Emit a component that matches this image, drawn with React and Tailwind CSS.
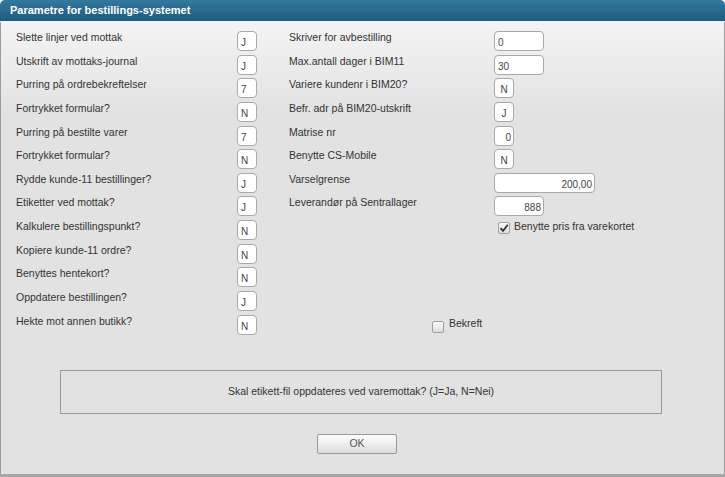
import React from 'react';

const leftRows = [
  ['Slette linjer ved mottak', 'J'],
  ['Utskrift av mottaks-journal', 'J'],
  ['Purring på ordrebekreftelser', '7'],
  ['Fortrykket formular?', 'N'],
  ['Purring på bestilte varer', '7'],
  ['Fortrykket formular?', 'N'],
  ['Rydde kunde-11 bestillinger?', 'J'],
  ['Etiketter ved mottak?', 'J'],
  ['Kalkulere bestillingspunkt?', 'N'],
  ['Kopiere kunde-11 ordre?', 'N'],
  ['Benyttes hentekort?', 'N'],
  ['Oppdatere bestillingen?', 'J'],
  ['Hekte mot annen butikk?', 'N'],
];

const rightRows = [
  { label: 'Skriver for avbestilling', value: '0', box: 'w-[50px] text-left pl-[3px]' },
  { label: 'Max.antall dager i BIM11', value: '30', box: 'w-[50px] text-left pl-[3px]' },
  { label: 'Variere kundenr i BIM20?', value: 'N', box: 'w-[20px] text-center' },
  { label: 'Befr. adr på BIM20-utskrift', value: 'J', box: 'w-[20px] text-center' },
  { label: 'Matrise nr', value: '0', box: 'w-[20px] text-right pr-[2px]' },
  { label: 'Benytte CS-Mobile', value: 'N', box: 'w-[20px] text-center' },
  { label: 'Varselgrense', value: '200,00', box: 'w-[101px] text-right pr-[2px]' },
  { label: 'Leverandør på Sentrallager', value: '888', box: 'w-[50px] text-right pr-[2px]' },
];

const Field = ({ value, className }) => (
  <div
    className={`h-[20px] shrink-0 rounded-[4px] border border-[#a9a9a9] bg-white pt-[5px] text-[10px] leading-[12px] text-[#444] ${className}`}
  >
    {value}
  </div>
);

const CheckBox = ({ checked }) => (
  <div className="flex h-[12px] w-[12px] shrink-0 items-center justify-center rounded-[2px] border border-[#a0a0a0] bg-[linear-gradient(#fafafa,#dcdcdc)]">
    {checked && (
      <svg width="10" height="10" viewBox="0 0 10 10">
        <path d="M1.5 5.2 L4 7.8 L8.8 1.8" fill="none" stroke="#333" strokeWidth="1.8" />
      </svg>
    )}
  </div>
);

export default function App() {
  return (
    <div className="flex h-[477px] w-[725px] flex-col overflow-hidden font-['Liberation_Sans',Arial,sans-serif] text-[#333]">
      <div className="flex h-[22px] shrink-0 items-center rounded-t-[5px] border-b border-[#e8f2f8] bg-[linear-gradient(#33789e,#1e5b80)] pl-[10px] text-[11px] font-bold text-white">
        Parametre for bestillings-systemet
      </div>

      <div className="flex flex-1 flex-col border-x border-[#9c9c9c] bg-[linear-gradient(#f4f4f4,#e2e2e2_90px)] pl-[14px] pt-[9px]">
        <div className="flex">
          <div className="flex w-[242px] flex-col">
            {leftRows.map(([label, value], i) => (
              <div key={i} className="flex h-[23.65px] items-start justify-between">
                <span className="pl-[1px] text-[10.5px] leading-[13px]">{label}</span>
                <Field value={value} className="w-[20px] pl-[3px]" />
              </div>
            ))}
          </div>

          <div className="ml-[32px] flex flex-col">
            {rightRows.map((r, i) => (
              <div key={i} className="flex h-[23.65px] items-start">
                <span className="w-[205px] text-[10.5px] leading-[13px]">{r.label}</span>
                <Field value={r.value} className={r.box} />
              </div>
            ))}
            <div className="flex h-[23.65px] items-start pl-[209px] pt-[2px]">
              <CheckBox checked />
              <span className="ml-[4px] mt-[-2px] text-[10.5px] leading-[13px]">Benytte pris fra varekortet</span>
            </div>
            <div className="h-[70.95px]" />
            <div className="flex h-[23.65px] items-start pl-[143px] pt-[6px]">
              <CheckBox />
              <span className="ml-[5px] mt-[-4px] text-[10.5px] leading-[13px]">Bekreft</span>
            </div>
          </div>
        </div>

        <div className="ml-[45px] mt-[32px] flex h-[44px] w-[602px] items-center justify-center border border-[#9a9a9a] text-[10.5px]">
          Skal etikett-fil oppdateres ved varemottak? (J=Ja, N=Nei)
        </div>

        <button className="ml-[302px] mt-[20px] h-[20px] w-[80px] rounded-[2px] border border-[#9a9a9a] bg-[linear-gradient(#fdfdfd,#dedede)] text-[10.5px] text-[#555]">
          OK
        </button>
      </div>

      <div className="h-[3px] shrink-0 bg-[#a8a8a8]" />
    </div>
  );
}
